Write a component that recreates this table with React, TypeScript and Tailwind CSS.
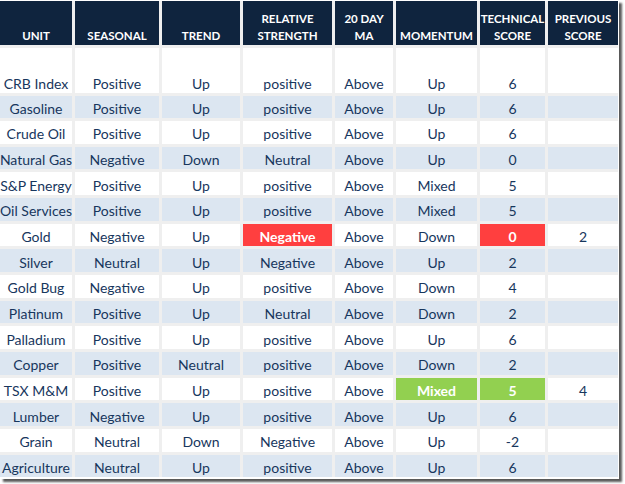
const headers = [
  ["UNIT"],
  ["SEASONAL"],
  ["TREND"],
  ["RELATIVE", "STRENGTH"],
  ["20 DAY", "MA"],
  ["MOMENTUM"],
  ["TECHNICAL", "SCORE"],
  ["PREVIOUS", "SCORE"],
];

type Row = string[];

const rows: Row[] = [
  ["CRB Index", "Positive", "Up", "positive", "Above", "Up", "6", ""],
  ["Gasoline", "Positive", "Up", "positive", "Above", "Up", "6", ""],
  ["Crude Oil", "Positive", "Up", "positive", "Above", "Up", "6", ""],
  ["Natural Gas", "Negative", "Down", "Neutral", "Above", "Up", "0", ""],
  ["S&P Energy", "Positive", "Up", "positive", "Above", "Mixed", "5", ""],
  ["Oil Services", "Positive", "Up", "positive", "Above", "Mixed", "5", ""],
  ["Gold", "Negative", "Up", "Negative", "Above", "Down", "0", "2"],
  ["Silver", "Neutral", "Up", "Negative", "Above", "Up", "2", ""],
  ["Gold Bug", "Negative", "Up", "positive", "Above", "Down", "4", ""],
  ["Platinum", "Positive", "Up", "Neutral", "Above", "Down", "2", ""],
  ["Palladium", "Positive", "Up", "positive", "Above", "Up", "6", ""],
  ["Copper", "Positive", "Neutral", "positive", "Above", "Down", "2", ""],
  ["TSX M&M", "Positive", "Up", "positive", "Above", "Mixed", "5", "4"],
  ["Lumber", "Negative", "Up", "positive", "Above", "Up", "6", ""],
  ["Grain", "Neutral", "Down", "Negative", "Above", "Up", "-2", ""],
  ["Agriculture", "Neutral", "Up", "positive", "Above", "Up", "6", ""],
];

// highlighted cells: "row-col" -> colour
const highlights: Record<string, string> = {
  "6-3": "bg-[#ff3f3f]",
  "6-6": "bg-[#ff3f3f]",
  "12-5": "bg-[#92d050]",
  "12-6": "bg-[#92d050]",
};

export default function App() {
  return (
    <div
      className="w-[625px] h-[484px] bg-white overflow-hidden"
      style={{ fontFamily: 'Lato, "Open Sans", sans-serif' }}
    >
      <div className="w-[619px] pt-px pr-px pb-[2px] bg-white shadow-[3px_3px_2px_rgba(0,0,0,0.65)]">
        <div className="grid grid-cols-[72px_84px_78px_89px_58px_81px_65px_70px] gap-[3px] bg-[#efefef]">
          {headers.map((h, i) => (
            <div
              key={i}
              className="h-[44px] bg-[#0f243e] text-white font-bold text-[11.5px] leading-[16.5px] flex flex-col items-center justify-end pb-[1px] text-center"
            >
              {h.map((line) => (
                <span key={line}>{line}</span>
              ))}
            </div>
          ))}

          {rows.map((row, r) =>
            row.map((cell, c) => {
              const hl = highlights[`${r}-${c}`];
              const stripe = r % 2 === 1 ? "bg-[#dce6f1]" : "bg-white";
              return (
                <div
                  key={`${r}-${c}`}
                  className={`${r === 0 ? "h-[44.5px] items-end pb-0" : "h-[22.67px] items-center pt-[3px]"} flex justify-center whitespace-nowrap text-[14px] leading-[19px] ${
                    hl ? `${hl} text-white font-bold` : `${stripe} text-[#17365d]`
                  }`}
                >
                  {cell}
                </div>
              );
            })
          )}
        </div>
      </div>
    </div>
  );
}
